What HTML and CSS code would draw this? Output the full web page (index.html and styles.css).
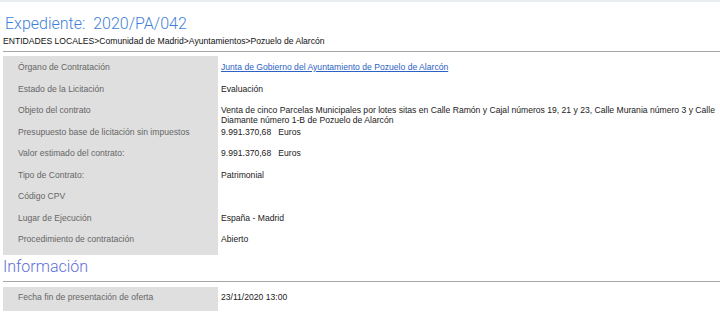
FILE: index.html
```html
<!DOCTYPE html>
<html lang="es">
<head>
<meta charset="utf-8">
<title>Expediente 2020/PA/042</title>
<link rel="stylesheet" href="styles.css">
</head>
<body>
<div class="topline"></div>
<main class="page">
  <header class="head">
    <h1 class="title">Expediente:&nbsp; 2020/PA/042</h1>
    <div class="crumbs">ENTIDADES LOCALES&gt;Comunidad de Madrid&gt;Ayuntamientos&gt;Pozuelo de Alarcón</div>
  </header>
  <hr class="rule">
  <dl class="details">
    <dt>Órgano de Contratación</dt>
    <dd><a href="#">Junta de Gobierno del Ayuntamiento de Pozuelo de Alarcón</a></dd>
    <dt>Estado de la Licitación</dt>
    <dd>Evaluación</dd>
    <dt>Objeto del contrato</dt>
    <dd>Venta de cinco Parcelas Municipales por lotes sitas en Calle Ramón y Cajal números 19, 21 y 23, Calle Murania número 3 y Calle Diamante número 1-B de Pozuelo de Alarcón</dd>
    <dt>Presupuesto base de licitación sin impuestos</dt>
    <dd>9.991.370,68&nbsp;&nbsp; Euros</dd>
    <dt>Valor estimado del contrato:</dt>
    <dd>9.991.370,68&nbsp;&nbsp; Euros</dd>
    <dt>Tipo de Contrato:</dt>
    <dd>Patrimonial</dd>
    <dt>Código CPV</dt>
    <dd></dd>
    <dt>Lugar de Ejecución</dt>
    <dd>España - Madrid</dd>
    <dt>Procedimiento de contratación</dt>
    <dd>Abierto</dd>
  </dl>
  <h2 class="section">Información</h2>
  <hr class="rule">
  <dl class="details single">
    <dt>Fecha fin de presentación de oferta</dt>
    <dd>23/11/2020 13:00</dd>
  </dl>
</main>
</body>
</html>
```
FILE: styles.css
```css
html, body {
  margin: 0;
  padding: 0;
  background: #ffffff;
}
body {
  width: 720px;
  height: 314px;
  overflow: hidden;
  font-family: "Liberation Sans", Arial, sans-serif;
}
.topline {
  height: 2px;
  background: #e9edf0;
}
.page {
  padding-left: 3px;
}
.title {
  margin: 0;
  padding: 12px 0 0 2px;
  font-family: Roboto, "Liberation Sans", sans-serif;
  font-weight: 300;
  font-size: 16px;
  line-height: 20px;
  color: #3f7fd9;
}
.crumbs {
  font-size: 8.6px;
  line-height: 10px;
  color: #111;
  margin-top: 2px;
}
.rule {
  margin: 5px 0 0 0;
  border: 0;
  height: 1px;
  background: #a6a6a6;
}
.details {
  margin: 4px 0 0 0;
  padding: 2px 0 3px 0;
  display: grid;
  grid-template-columns: 215px 1fr;
  grid-auto-rows: 21.5px;
  column-gap: 3px;
  background: linear-gradient(to right, #dfdfdf 215px, transparent 215px);
}
.details dt {
  margin: 0;
  padding: 4px 0 0 15px;
  font-size: 8.6px;
  line-height: 11px;
  color: #666;
  white-space: nowrap;
}
.details dd {
  margin: 0;
  padding: 4px 3px 0 0;
  font-size: 8.6px;
  line-height: 10px;
  color: #222;
}
.details dd a {
  color: #2d62c4;
  text-decoration: underline;
}
.section {
  margin: 0;
  padding-top: 2px;
  font-family: Roboto, "Liberation Sans", sans-serif;
  font-weight: 300;
  font-size: 16px;
  line-height: 20px;
  color: #5d6fd6;
}
.section + .rule {
  margin-top: 4px;
}
.details.single {
  margin-top: 5px;
  padding: 1px 0 2px 0;
}
```
